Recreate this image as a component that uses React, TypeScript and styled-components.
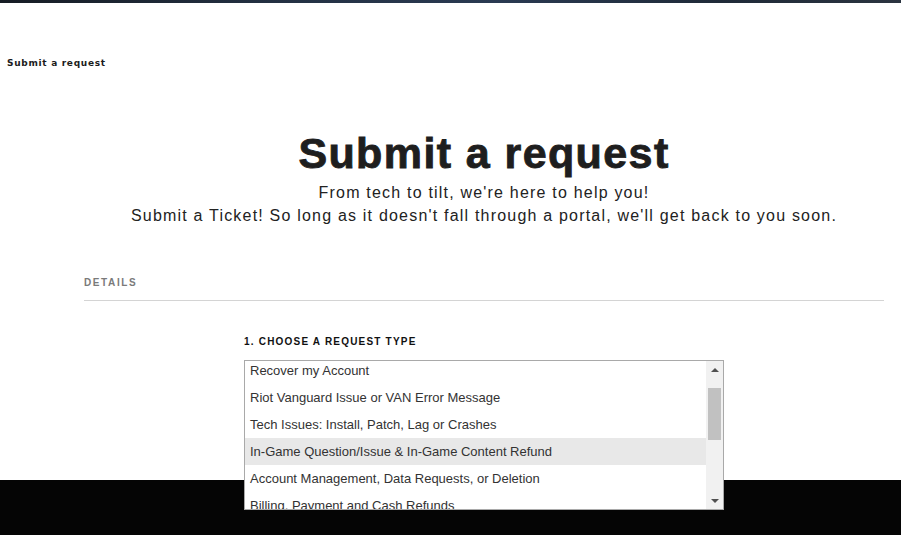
import React from 'react';
import styled, {createGlobalStyle} from 'styled-components';

const GlobalStyle = createGlobalStyle`
  html, body {
    margin: 0;
    padding: 0;
    background: #FFFFFF;
    font-family: "Liberation Sans", Arial, sans-serif;
    color: #222222;
  }
`;

const TopStrip = styled.div`
  height: 3px;
  background: linear-gradient(90deg, #161c24 0%, #233042 30%, #2a3a52 55%, #1f2a38 80%, #2b3440 100%);
`;

const Main = styled.main`
  height: 477px;
`;

const Breadcrumb = styled.div`
  padding: 53px 0 0 7px;
  font-family: "DejaVu Sans", Verdana, sans-serif;
  font-size: 9px;
  font-weight: bold;
  letter-spacing: 0.7px;
  color: #1b1b1b;
  line-height: 14px;
`;

const Hero = styled.header`
  margin-left: 84px;
  width: 800px;
  text-align: center;
  padding-top: 58px;

  > h1 {
    margin: 0;
    font-size: 43px;
    font-weight: 900;
    line-height: 50px;
    letter-spacing: 1.4px;
    color: #1e1e1e;
    -webkit-text-stroke: 0.9px #1e1e1e;
  }

  > p {
    margin: 3px 0 0;
    font-size: 16px;
    line-height: 23px;
    letter-spacing: 1.2px;
    color: #222222;
  }
`;

const Section = styled.section`
  margin: 50px 0 0 84px;
  width: 800px;
`;

const SectionTitle = styled.div`
  font-size: 10px;
  font-weight: bold;
  letter-spacing: 1.6px;
  color: #7a7a7a;
  padding-bottom: 12px;
  border-bottom: 1px solid #d4d4d4;
`;

const Field = styled.div`
  margin: 35px 0 0 160px;
  width: 480px;
`;

const FieldLabel = styled.label`
  display: block;
  font-size: 10px;
  font-weight: bold;
  letter-spacing: 1.2px;
  color: #111111;
  margin-bottom: 13px;
`;

const ListBox = styled.div`
  position: relative;
  z-index: 1;
  display: flex;
  height: 148px;
  border: 1px solid #a9a9a9;
  background: #FFFFFF;
  overflow: hidden;
`;

const Options = styled.ul`
  flex: 1;
  list-style: none;
  margin: -4px 0 0;
  padding: 0;
`;

const Option = styled.li<{ $selected?: boolean }>`
  height: 27px;
  line-height: 27px;
  padding: 0 5px;
  font-size: 13px;
  color: #333333;
  white-space: nowrap;
  background: ${p => (p.$selected ? '#e8e8e8' : 'transparent')};
`;

const Scrollbar = styled.div`
  width: 17px;
  display: flex;
  flex-direction: column;
  align-items: center;
  background: #f1f1f1;
`;

const Arrow = styled.div<{ $down?: boolean }>`
  height: 17px;
  width: 17px;
  display: flex;
  align-items: center;
  justify-content: center;

  &::before {
    content: '';
    border-left: 4px solid transparent;
    border-right: 4px solid transparent;
    ${p => (p.$down ? 'border-top: 4px solid #505050;' : 'border-bottom: 4px solid #505050;')}
  }
`;

const Thumb = styled.div`
  margin-top: 10px;
  width: 13px;
  height: 52px;
  background: #c1c1c1;
`;

const Spacer = styled.div`
  flex: 1;
`;

const Footer = styled.footer`
  height: 55px;
  background: #050505;
`;

const requestTypes = [
    'Recover my Account',
    'Riot Vanguard Issue or VAN Error Message',
    'Tech Issues: Install, Patch, Lag or Crashes',
    'In-Game Question/Issue & In-Game Content Refund',
    'Account Management, Data Requests, or Deletion',
    'Billing, Payment and Cash Refunds',
];

const App: React.FunctionComponent = () => {
    return (
        <>
            <GlobalStyle/>
            <TopStrip/>
            <Main>
                <Breadcrumb>Submit a request</Breadcrumb>
                <Hero>
                    <h1>Submit a request</h1>
                    <p>
                        From tech to tilt, we're here to help you!<br/>
                        Submit a Ticket! So long as it doesn't fall through a portal, we'll get back to you soon.
                    </p>
                </Hero>
                <Section>
                    <SectionTitle>DETAILS</SectionTitle>
                    <Field>
                        <FieldLabel>1. CHOOSE A REQUEST TYPE</FieldLabel>
                        <ListBox>
                            <Options>
                                {requestTypes.map((t, i) => (
                                    <Option key={t} $selected={i === 3}>{t}</Option>
                                ))}
                            </Options>
                            <Scrollbar>
                                <Arrow/>
                                <Thumb/>
                                <Spacer/>
                                <Arrow $down/>
                            </Scrollbar>
                        </ListBox>
                    </Field>
                </Section>
            </Main>
            <Footer/>
        </>
    );
};

export default App;
